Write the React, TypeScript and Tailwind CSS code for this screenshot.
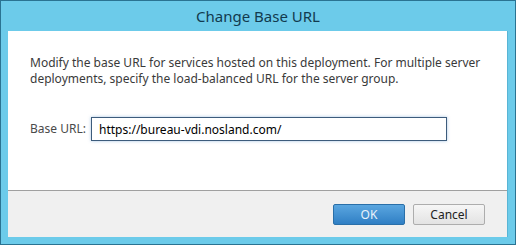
export default function App() {
  return (
    <div className="w-[516px] h-[245px] bg-white">
      <div className="flex h-full w-full flex-col border border-[#2a7392] bg-[#6ccbea] px-[7px] pb-[7px] font-['Noto_Sans',sans-serif]">
        {/* Title */}
        <div className="flex h-[30px] shrink-0 items-center justify-center text-[15px] text-[#123a4e]">
          Change Base URL
        </div>

        {/* Body */}
        <div className="flex flex-1 flex-col border-r border-[#58b5d5] bg-white">
          <div className="flex-1 px-[22px] pt-[24px]">
            <p className="flex flex-col text-[12px] leading-[16px] text-[#3a3a3a]">
              <span>Modify the base URL for services hosted on this deployment. For multiple server</span>
              <span>deployments, specify the load-balanced URL for the server group.</span>
            </p>
            <div className="mt-[30px] flex items-center">
              <label className="w-[61px] text-[12px] text-[#4a4a4a]">Base URL:</label>
              <input
                readOnly
                value="https://bureau-vdi.nosland.com/"
                className="h-[24px] w-[356px] border border-[#3d5c7c] bg-white px-[7px] text-[12px] text-black shadow-[0_0_3px_rgba(80,140,200,0.5)] outline-none"
              />
            </div>
          </div>

          {/* Footer */}
          <div className="flex h-[47px] shrink-0 items-center justify-end gap-[8px] border-t border-[#a0a0a0] bg-[#f0f0f0] pr-[22px] pt-[1px]">
            <button className="h-[21px] w-[72px] rounded-[2px] border border-[#2a6fa8] bg-gradient-to-b from-[#5aa6e0] to-[#2f7fc4] text-[12px] text-[#e8f2fb]">
              OK
            </button>
            <button className="h-[21px] w-[72px] rounded-[2px] border border-[#adadad] bg-gradient-to-b from-[#f6f6f6] to-[#e3e3e3] text-[12px] text-[#222]">
              Cancel
            </button>
          </div>
        </div>
      </div>
    </div>
  );
}
